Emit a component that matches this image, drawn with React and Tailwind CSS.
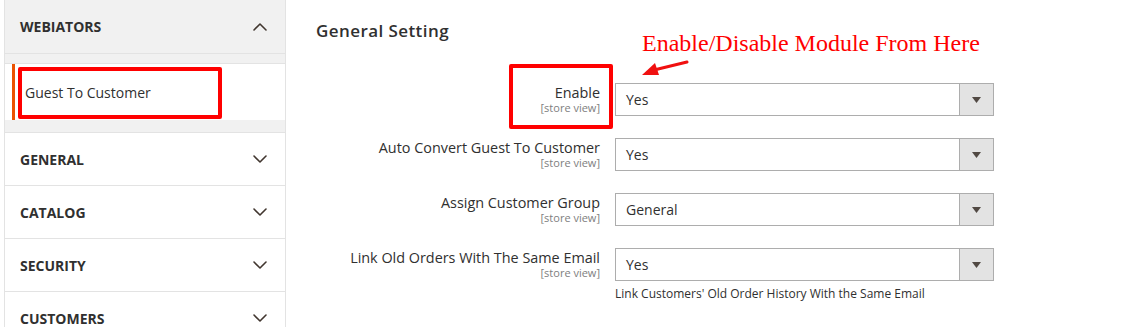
import React from 'react';
import { ChevronDown, ChevronUp } from 'lucide-react';

const sections = ['General', 'Catalog', 'Security', 'Customers'];

const fields = [
  { label: 'Enable', value: 'Yes' },
  { label: 'Auto Convert Guest To Customer', value: 'Yes' },
  { label: 'Assign Customer Group', value: 'General' },
  {
    label: 'Link Old Orders With The Same Email',
    value: 'Yes',
    note: "Link Customers' Old Order History With the Same Email",
  },
];

const Select = ({ value }) => (
  <div className="flex h-[33px] w-[379px] border border-[#adadad] bg-white">
    <div className="flex flex-1 items-center pl-[10px] text-[14px] text-[#303030]">{value}</div>
    <div className="flex w-[34px] items-center justify-center border-l border-[#adadad] bg-[#e3e3e3]">
      <svg width="9" height="6" viewBox="0 0 9 6">
        <path d="M0 0 H9 L4.5 6 Z" fill="#514943" />
      </svg>
    </div>
  </div>
);

const App = () => {
  return (
    <div className="relative h-[327px] w-[1148px] overflow-hidden bg-white font-['Open_Sans',sans-serif] text-[#303030]">
      <div className="flex">
        {/* Sidebar */}
        <aside className="ml-[4px] w-[282px] shrink-0 border-x border-[#e3e3e3] bg-[#f1f1f1]">
          <div className="flex h-[54px] items-center justify-between border-b border-[#e3e3e3] pl-[15px] pr-[13px]">
            <span className="text-[14px] font-bold uppercase">Webiators</span>
            <ChevronUp size={24} strokeWidth={1.6} color="#41362f" />
          </div>
          <div className="border-b border-[#e3e3e3] pt-[9px] pb-[12px]">
            <div className="h-[57px] border-t border-[#e3e3e3] bg-white">
              <div className="ml-[7px] flex h-full items-center border-l-[3px] border-[#eb5202] pl-[10px] text-[14px]">
                Guest To Customer
              </div>
            </div>
          </div>
          {sections.map((s) => (
            <div
              key={s}
              className="flex h-[53px] items-center justify-between border-b border-[#e3e3e3] bg-white pl-[15px] pr-[13px]"
            >
              <span className="text-[14px] font-bold uppercase">{s}</span>
              <ChevronDown size={24} strokeWidth={1.6} color="#41362f" />
            </div>
          ))}
        </aside>

        {/* Main content */}
        <main className="flex-1 pl-[30px] pt-[19px]">
          <h2 className="text-[17px] font-semibold leading-[24px] tracking-[0.025em]">General Setting</h2>
          <div className="mt-[40px] flex flex-col gap-[22px]">
            {fields.map((f) => (
              <div key={f.label} className="flex">
                <div className="w-[284px] pt-[1px] text-right">
                  <div className="text-[14.4px] leading-[17px]">{f.label}</div>
                  <div className="mt-[1px] text-[11px] leading-[12px] text-[#808080]">[store view]</div>
                </div>
                <div className="ml-[15px]">
                  <Select value={f.value} />
                  {f.note && <div className="mt-[5px] text-[12px] leading-[16px]">{f.note}</div>}
                </div>
              </div>
            ))}
          </div>
        </main>
      </div>

      {/* Annotations */}
      <div className="absolute left-[18px] top-[67px] h-[52px] w-[204px] rounded-[2px] border-4 border-[#ff0000]" />
      <div className="absolute left-[509px] top-[64px] h-[65px] w-[104px] rounded-[2px] border-4 border-[#ff0000]" />
      <div className="absolute left-[642px] top-[31px] whitespace-nowrap font-['Liberation_Serif',serif] text-[24px] leading-[24px] text-[#ff0000]">
        Enable/Disable Module From Here
      </div>
      <svg className="absolute left-[638px] top-[56px]" width="56" height="24" viewBox="0 0 56 24">
        <line x1="49" y1="6" x2="16" y2="14" stroke="#f01010" strokeWidth="3" strokeLinecap="round" />
        <polygon points="4,19 17,7 21,19" fill="#f01010" />
      </svg>
    </div>
  );
};

export default App;
